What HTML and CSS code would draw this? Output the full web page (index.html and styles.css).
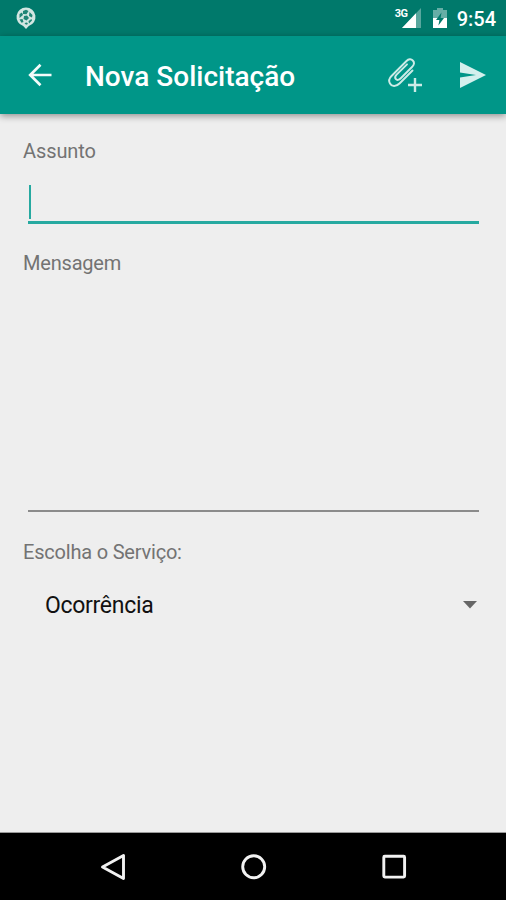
FILE: index.html
```html
<!DOCTYPE html>
<html lang="pt-BR">
<head>
<meta charset="utf-8">
<title>Nova Solicitação</title>
<link rel="stylesheet" href="styles.css">
</head>
<body>
<div class="screen">
  <div class="status">
    <svg class="notice" width="22" height="24" viewBox="0 0 22 24">
      <path d="M11 1.500a9.400 9.400 0 0 1 2.800 18.400L11 23l-2.800-3.100A9.400 9.400 0 0 1 11 1.500z" fill="#d2e6e2"/>
      <g fill="#1f8575">
        <path d="M8 5l3-1.200L13.500 5l-2 3.200L8 8zM14.500 6l3 3-.5 2.500-3-1.500zM4.500 8l2.500-1.500L8 9l-3.500 3zM9 10l3-.5 2 2.500-2.500 2.500L8.500 13zM4.500 13.500L7.500 13l1 3-2 .8zM13.500 15l3-2 .5 1.500-3 3zM9.500 17l2.500-.5 1 1.500-2 .7z"/>
      </g>
    </svg>
    <span class="network">3G</span>
    <svg class="signal" width="19" height="20" viewBox="0 0 19 20">
      <path d="M19 0v20H0z" fill="#fff" opacity=".35"/>
      <path d="M14 5.300V20H0z" fill="#fff"/>
    </svg>
    <svg class="battery" width="14" height="20" viewBox="0 0 14 20">
      <path d="M4 0h6v2h4v8H0V2h4z" fill="#fff" opacity=".4"/>
      <path d="M0 10h14v10H0z" fill="#fff"/>
      <path d="M8.500 4.500L3 12h3.400l-1 5.500L11 10H7.600z" fill="#00796b"/>
    </svg>
    <span class="clock">9:54</span>
  </div>
  <header class="appbar">
    <svg class="back" width="24" height="24" viewBox="0 0 24 24">
      <path d="M23.500 12H3M12.500 1.800L2.200 12l10.300 10.200" fill="none" stroke="#f4fbfa" stroke-width="2.700"/>
    </svg>
    <h1 class="title">Nova Solicitação</h1>
    <svg class="attach" width="36" height="38" viewBox="386 56 36 38">
      <g fill="none" stroke="#cdebe7" stroke-width="1.900" stroke-linecap="round">
        <path d="M412.500 70.500L399.500 83.500C396 87 391.500 86.500 390 83.500C388.500 81 389.500 78 391.500 76L406.500 61C408.500 59 411 58.500 412.800 60.500C414.500 62.300 414 65 412 67L400.500 78.500C399 80 397 80.500 395.900 79.200C394.700 77.900 395.300 76 396.600 74.700L407 64.300"/>
      </g>
      <path d="M415 78v14M408 85h14" fill="none" stroke="#cdebe7" stroke-width="2.400"/>
    </svg>
    <svg class="send" width="28" height="26" viewBox="0 0 28 26">
      <path d="M1 0l26 13L1 26V15.500L17 13 1 10.500z" fill="#d4f0ed"/>
    </svg>
  </header>
  <main class="form">
    <label class="label subject-label"><span>Assunto</span></label>
    <div class="subject"><span class="caret"></span></div>
    <label class="label message-label"><span>Mensagem</span></label>
    <div class="message"></div>
    <label class="label service-label"><span>Escolha o Serviço:</span></label>
    <div class="select">
      <span class="value">Ocorrência</span>
      <svg class="arrow" width="14" height="8" viewBox="0 0 14 8"><path d="M0 0h14L7 7.500z" fill="#666"/></svg>
    </div>
  </main>
  <nav class="navbar">
    <svg width="28" height="30" viewBox="0 0 28 30"><path d="M24.500 3.500v23L3.500 15z" fill="none" stroke="#f2f2f2" stroke-width="2.900" stroke-linejoin="round"/></svg>
    <svg width="28" height="30" viewBox="0 0 28 30"><circle cx="13.700" cy="14.700" r="11" fill="none" stroke="#f2f2f2" stroke-width="2.900"/></svg>
    <svg width="28" height="30" viewBox="0 0 28 30"><rect x="3.800" y="4.300" width="20.800" height="20.800" rx="1" fill="none" stroke="#f2f2f2" stroke-width="2.900"/></svg>
  </nav>
</div>
</body>
</html>
```

FILE: styles.css
```css
* { box-sizing: border-box; }
body { margin: 0; font-family: Roboto, sans-serif; }
svg { display: block; flex: none; }
.screen {
  width: 506px;
  height: 900px;
  display: flex;
  flex-direction: column;
  background: #eee;
  overflow: hidden;
}
.status {
  height: 36px;
  flex: none;
  display: flex;
  align-items: flex-start;
  padding: 0 10px 0 15px;
  background: #00796b;
  color: #fff;
}
.notice { margin-top: 6px; }
.network {
  margin: 8px -6px 0 auto;
  font-size: 11px;
  line-height: 12px;
  font-weight: 700;
  letter-spacing: -0.5px;
}
.signal { margin-top: 8px; }
.battery { margin: 8px 10px 0 12px; }
.clock { font-size: 20px; line-height: 24px; font-weight: 500; margin-top: 7px; }
.appbar {
  height: 78px;
  flex: none;
  display: flex;
  align-items: center;
  padding: 0 19px 0 28px;
  background: #009688;
  box-shadow: 0 2px 7px rgba(0, 0, 0, 0.4);
}
.title {
  margin: 4px 0 0 33px;
  font-size: 28px;
  line-height: 34px;
  font-weight: 500;
  color: #fff;
  white-space: nowrap;
}
.attach { margin-left: auto; }
.send { margin-left: 37px; }
.form {
  flex: 1;
  display: flex;
  flex-direction: column;
  padding: 25px 27px 0 23px;
}
.label { display: block; height: 24px; font-size: 20px; line-height: 24px; letter-spacing: -0.2px; color: #737373; }
.subject-label { letter-spacing: -0.1px; }
.subject {
  height: 41px;
  margin: 20px 0 0 5px;
  padding: 2px 0 0 1px;
  border-bottom: 3px solid #26a9a0;
}
.caret { display: block; width: 2px; height: 34px; background: #26a9a0; }
.message-label { margin-top: 27px; }
.message { height: 237px; margin-left: 5px; border-bottom: 2px solid #8b8b8b; }
.service-label { margin-top: 28px; }
.select {
  display: flex;
  align-items: center;
  justify-content: space-between;
  height: 28px;
  margin: 28px 2px 0 22px;
}
.value { font-size: 23px; line-height: 28px; letter-spacing: -0.3px; color: #111; }
.arrow { margin-bottom: 2px; }
.navbar {
  height: 68px;
  flex: none;
  display: flex;
  justify-content: space-between;
  padding: 19px 98px 0 99px;
  background: #000;
  border-top: 1px solid #999;
}
```
